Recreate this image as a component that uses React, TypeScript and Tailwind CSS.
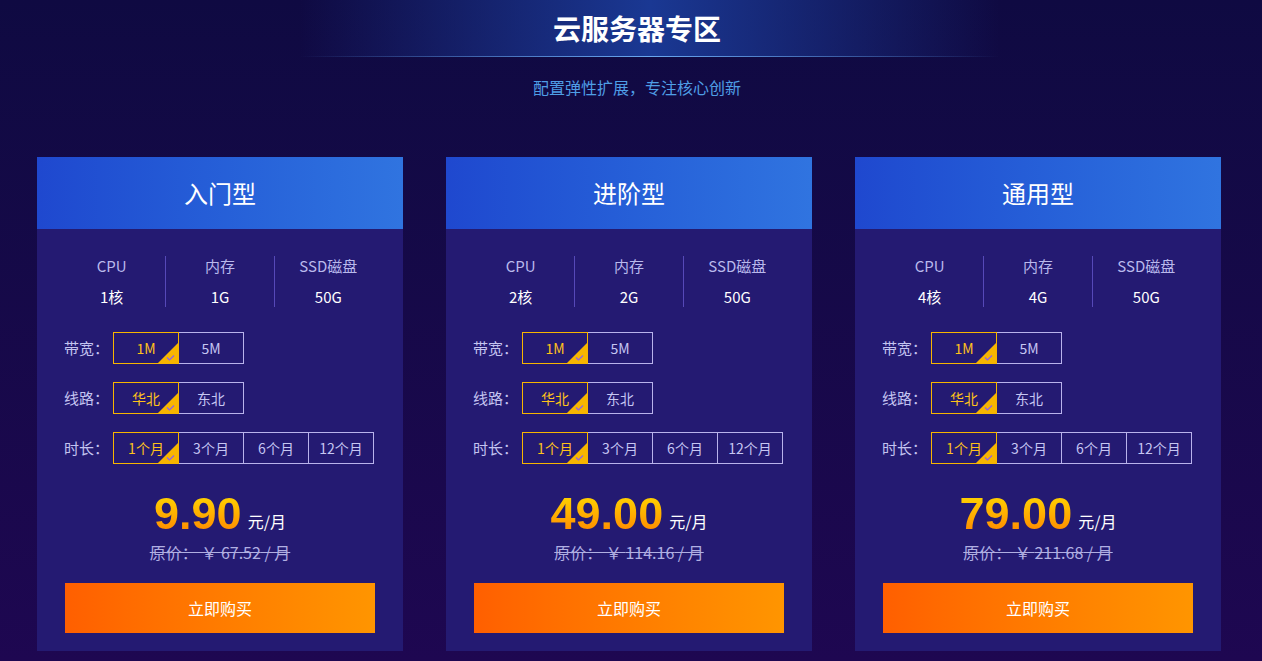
import { useState } from 'react';

type Plan = {
  name: string;
  cpu: string;
  mem: string;
  disk: string;
  price: string;
  original: string;
};

const plans: Plan[] = [
  { name: '入门型', cpu: '1核', mem: '1G', disk: '50G', price: '9.90', original: '67.52' },
  { name: '进阶型', cpu: '2核', mem: '2G', disk: '50G', price: '49.00', original: '114.16' },
  { name: '通用型', cpu: '4核', mem: '4G', disk: '50G', price: '79.00', original: '211.68' },
];

const font = { fontFamily: '"Microsoft YaHei", "Noto Sans CJK SC", "Liberation Sans", sans-serif' };

function OptionRow({ label, options }: { label: string; options: string[] }) {
  const [active, setActive] = useState(0);
  return (
    <div className="flex items-center h-8">
      <span className="w-[49px] text-[15px] text-[#c3c3f0]">{label}</span>
      <div className="flex">
        {options.map((opt, i) => (
          <button
            key={opt}
            onClick={() => setActive(i)}
            className={
              'relative w-[66px] h-8 text-[14px] border -ml-px first:ml-0 ' +
              (i === active
                ? 'border-[#f7b500] text-[#ffc21a] z-10'
                : 'border-[#b9b3ec] text-[#c6c6f2]')
            }
          >
            {opt}
            {i === active && (
              <svg className="absolute right-0 bottom-0" width="20" height="20" viewBox="0 0 20 20">
                <polygon points="20,0 20,20 0,20" fill="#f7b500" />
                <path d="M9 14.5 L11.5 17 L16 12.5" stroke="#8b62e8" strokeWidth="1.2" fill="none" />
              </svg>
            )}
          </button>
        ))}
      </div>
    </div>
  );
}

function PlanCard({ plan }: { plan: Plan }) {
  return (
    <div className="w-[366px] bg-[#241a72] flex flex-col">
      <div className="h-[72px] flex items-center justify-center bg-linear-to-r from-[#1f48cf] to-[#3074e0] text-white text-[24px]">
        {plan.name}
      </div>
      <div className="flex mt-[27px] px-[21px]">
        {[
          ['CPU', plan.cpu],
          ['内存', plan.mem],
          ['SSD磁盘', plan.disk],
        ].map(([k, v], i) => (
          <div
            key={k}
            className={
              'flex-1 flex flex-col items-center gap-[11px] ' +
              (i > 0 ? 'border-l border-[#5649b8]' : '')
            }
          >
            <span className="text-[15px] leading-[20px] text-[#b9b9ec]">{k}</span>
            <span className="text-[15px] leading-[20px] text-white">{v}</span>
          </div>
        ))}
      </div>
      <div className="flex flex-col gap-[18px] mt-[25px] pl-[27px]">
        <OptionRow label="带宽：" options={['1M', '5M']} />
        <OptionRow label="线路：" options={['华北', '东北']} />
        <OptionRow label="时长：" options={['1个月', '3个月', '6个月', '12个月']} />
      </div>
      <div className="flex items-end justify-center mt-[27px] h-[46px]">
        <span className="text-[45px] leading-[46px] font-bold bg-linear-to-b from-[#ffdc00] to-[#ff7f00] bg-clip-text text-transparent" style={{ fontFamily: '"Liberation Sans", Arial, sans-serif' }}>
          {plan.price}
        </span>
        <span className="text-[16px] text-white ml-[6px] mb-[4px]">元/月</span>
      </div>
      <div className="text-center text-[16px] text-[#b0afe2] line-through mt-[3px]">
        原价： ￥ {plan.original} / 月
      </div>
      <button className="mx-[28px] mt-[19px] mb-[18px] h-[50px] bg-linear-to-r from-[#ff5f00] to-[#ff9500] text-white text-[16px]">
        立即购买
      </button>
    </div>
  );
}

export default function App() {
  return (
    <div
      className="w-full h-[661px] overflow-hidden bg-linear-to-b from-[#0f0a42] to-[#1e0751]"
      style={font}
    >
      <div className="relative ml-[300px] w-[700px] h-[57px] flex items-center justify-center pr-[26px] bg-linear-to-r from-[rgba(15,10,66,0)] via-[#1a3893] to-[rgba(15,10,66,0)]">
        <h1 className="text-[28px] font-bold text-white -mt-[2px]">云服务器专区</h1>
        <div className="absolute left-0 right-0 bottom-0 h-px bg-linear-to-r from-transparent via-[#6aa8f0] to-transparent" />
      </div>
      <p className="ml-[300px] w-[674px] text-center text-[16px] text-[#4f9ee6] mt-[18px]">配置弹性扩展，专注核心创新</p>
      <div className="flex gap-[43px] pl-[37px] mt-[58px]">
        {plans.map((p) => (
          <PlanCard key={p.name} plan={p} />
        ))}
      </div>
    </div>
  );
}
